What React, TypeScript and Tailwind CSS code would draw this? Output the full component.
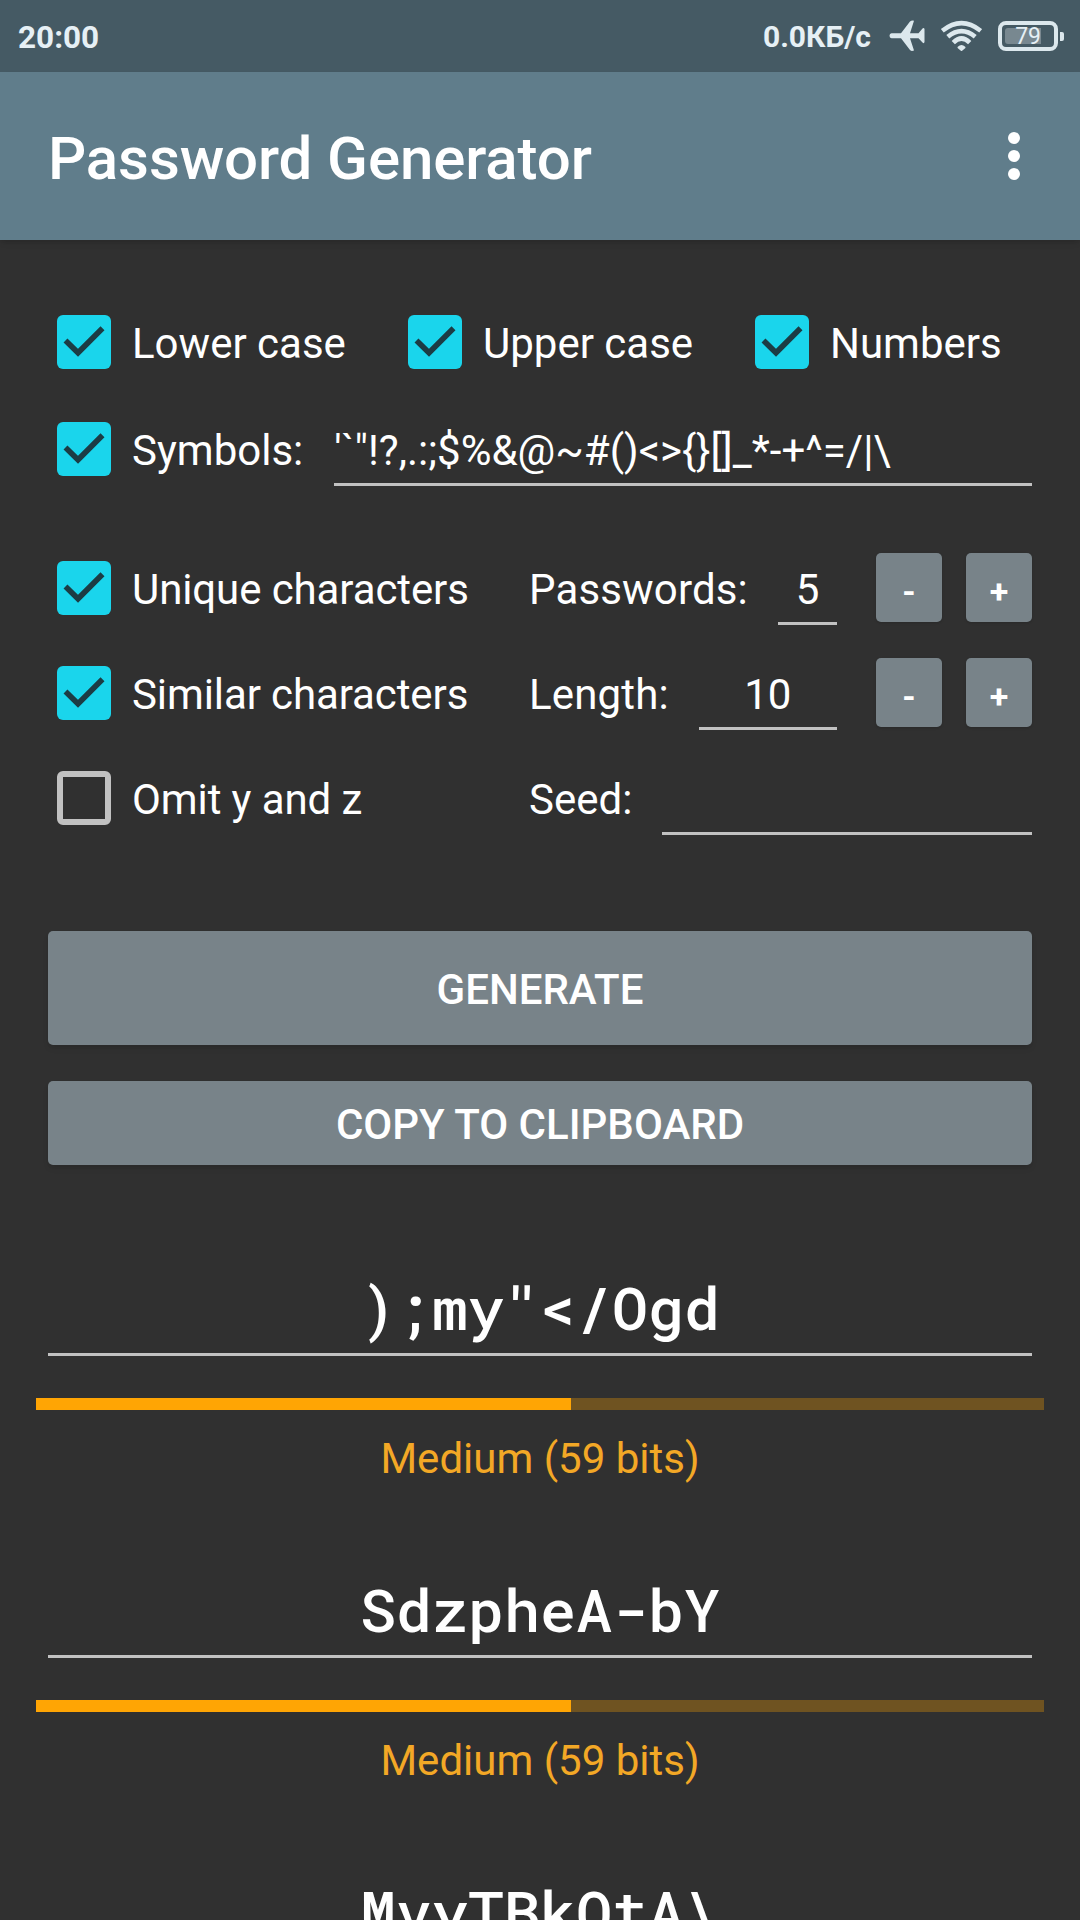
import React, { useState } from 'react';

type Entry = {
  value: string;
  label: string;
  strength: number;
};

const entries: Entry[] = [
  { value: ');my"</Ogd', label: 'Medium (59 bits)', strength: 53.1 },
  { value: 'SdzpheA-bY', label: 'Medium (59 bits)', strength: 53.1 },
  { value: 'MvyTBkQtA\\', label: 'Medium (59 bits)', strength: 53.1 },
];

const StatusBar = () => (
  <div className="h-[72px] bg-[#455a64] flex items-center justify-between pl-[18px] pr-4 text-[#e6f0f5]">
    <span className="text-[31.5px] leading-[36px] font-bold pt-[3px]">20:00</span>
    <div className="flex items-center">
      <span className="text-[30px] leading-[36px] font-bold mr-[18px] pt-[2px]">0.0КБ/с</span>
      <svg width="36" height="32" viewBox="0 0 36 32" className="mr-[15px]" fill="#dce8ed">
        <path d="M2.5 13.3H12L21 1.5Q22.500 .3 25 .7L21 13.3H29.500L33.500 8.500Q35 7.500 35.500 9V22Q35 24 33.500 22.500L29.500 18.200H21L25 30.500Q22.500 31.500 21 30L12 18.200H2.500Q.5 17.700 .5 15.700Q.5 13.600 2.500 13.300Z" />
      </svg>
      <svg width="42" height="32" viewBox="0 0 42 32" className="mr-4" fill="none" stroke="#dce8ed" strokeWidth="4.6">
        <path d="M2.300 10.800Q21.500 -4.500 40.700 10.800" />
        <path d="M7.800 16.800Q21.500 5.500 35.200 16.800" />
        <path d="M13.300 22.600Q21.500 14.500 29.700 22.600" />
        <path d="M18.500 27.500Q21.500 24.500 24.500 27.500L21.500 30Z" fill="#dce8ed" strokeWidth="2" strokeLinejoin="round" />
      </svg>
      <div className="flex items-center gap-[2px]">
        <div className="w-[60px] h-[30px] rounded-[8px] border-4 border-[#dce8ed] p-[3px] flex">
          <div className="w-[36px] h-full bg-[#788890] rounded-l-[3px] text-[23px] leading-[18px] text-right">79</div>
        </div>
        <div className="w-1 h-[9px] rounded-r-[2px] bg-[#dce8ed]" />
      </div>
    </div>
  </div>
);

const AppBar = () => (
  <header className="h-[168px] bg-[#607d8b] flex items-center justify-between pl-12 pr-[60px] shadow-md">
    <h1 className="text-[60px] leading-[70px] tracking-[-0.1px] font-medium text-white pt-[5px]">Password Generator</h1>
    <button type="button" aria-label="More options" className="flex flex-col gap-[6px] pb-[1px]">
      <span className="size-3 rounded-full bg-white" />
      <span className="size-3 rounded-full bg-white" />
      <span className="size-3 rounded-full bg-white" />
    </button>
  </header>
);

type CheckProps = {
  label: string;
  initial?: boolean;
};

const Check = ({ label, initial = true }: CheckProps) => {
  const [checked, setChecked] = useState(initial);

  return (
    <button
      type="button"
      role="checkbox"
      aria-checked={checked}
      onClick={() => setChecked(!checked)}
      className="flex items-center gap-[21px] h-[54px] shrink-0 whitespace-nowrap"
    >
      {checked ? (
        <span className="size-[54px] rounded-[6px] bg-[#1ad5ec]">
          <svg width="54" height="54" viewBox="0 0 54 54" fill="none" stroke="#1c3c44" strokeWidth="5.6">
            <path d="M8.5 25.500L21 37.700L45.500 13.200" />
          </svg>
        </span>
      ) : (
        <span className="size-[54px] rounded-[6px] border-[6px] border-[#c1c1c1]" />
      )}
      <span className="pt-1">{label}</span>
    </button>
  );
};

type StepperProps = {
  label: string;
  initial: number;
};

const Stepper = ({ label, initial }: StepperProps) => {
  const [value, setValue] = useState(initial);

  return (
    <div className="flex h-[77px]">
      <span className="mt-[12px] mr-[30px] tracking-[0.15px]">{label}</span>
      <div className="flex-1 h-[72px] mr-[39px] border-b-3 border-[#c1c1c1] text-center pt-[12px]">{value}</div>
      <div className="flex gap-6 text-[34px] font-bold">
        <button type="button" onClick={() => setValue(value - 1)} className="w-[66px] h-[69px] pt-[7px] rounded-[5px] bg-[#788389] shadow-sm">
          -
        </button>
        <button type="button" onClick={() => setValue(value + 1)} className="w-[66px] h-[69px] pt-[7px] rounded-[5px] bg-[#788389] shadow-sm">
          +
        </button>
      </div>
    </div>
  );
};

const PasswordEntry = ({ value, label, strength }: Entry) => (
  <div className="h-[302px] px-9">
    <div className="mx-3 h-[90px] border-b-3 border-[#c1c1c1] text-center whitespace-pre font-[550] text-[60px] leading-[82px] font-['Roboto_Mono','DejaVu_Sans_Mono',monospace]">
      {value}
    </div>
    <div className="mt-[42px] h-3 bg-[#6f5321]">
      <div className="h-full bg-[#ffa504]" style={{ width: `${strength}%` }} />
    </div>
    <div className="mt-[24px] text-center text-[#f3a826]">{label}</div>
  </div>
);

const App = () => {
  return (
    <div className="w-[1080px] h-[1920px] overflow-hidden bg-[#303030] text-white text-[42px] leading-[50px] font-['Roboto',sans-serif]">
      <StatusBar />
      <AppBar />

      <main>
        <div className="pl-[57px] pr-12 pt-[75px]">
          <div className="flex">
            <div className="w-[351px]"><Check label="Lower case" /></div>
            <div className="w-[347px]"><Check label="Upper case" /></div>
            <Check label="Numbers" />
          </div>

          <div className="flex mt-[53px]">
            <Check label="Symbols:" />
            <div className="ml-[31px] flex-1 h-[64px] pt-1 border-b-3 border-[#c1c1c1] whitespace-nowrap">
              {'\'`"!?,.:;$%&@~#()<>{}[]_*-+^=/|\\'}
            </div>
          </div>
        </div>

        <div className="flex justify-between pl-[57px] pr-12 mt-[67px]">
          <div className="flex flex-col gap-[51px] pt-[8px] tracking-[-0.1px]">
            <Check label="Unique characters" />
            <Check label="Similar characters" />
            <Check label="Omit y and z" initial={false} />
          </div>
          <div className="w-[503px] flex flex-col gap-[28px]">
            <Stepper label="Passwords:" initial={5} />
            <Stepper label="Length:" initial={10} />
            <div className="flex h-[77px]">
              <span className="mt-[12px] mr-[30px]">Seed:</span>
              <div className="flex-1 h-[72px] border-b-3 border-[#c1c1c1]" />
            </div>
          </div>
        </div>

        <div className="flex flex-col gap-9 px-12 mt-[91px] mb-[101px]">
          <button type="button" className="h-[114px] pt-1 rounded-[5px] bg-[#788389] shadow-md font-medium">
            GENERATE
          </button>
          <button type="button" className="h-[84px] pt-1 rounded-[5px] bg-[#788389] shadow-md font-medium">
            COPY TO CLIPBOARD
          </button>
        </div>

        {entries.map((e) => (
          <PasswordEntry key={e.value} {...e} />
        ))}
      </main>
    </div>
  );
};

export default App;
